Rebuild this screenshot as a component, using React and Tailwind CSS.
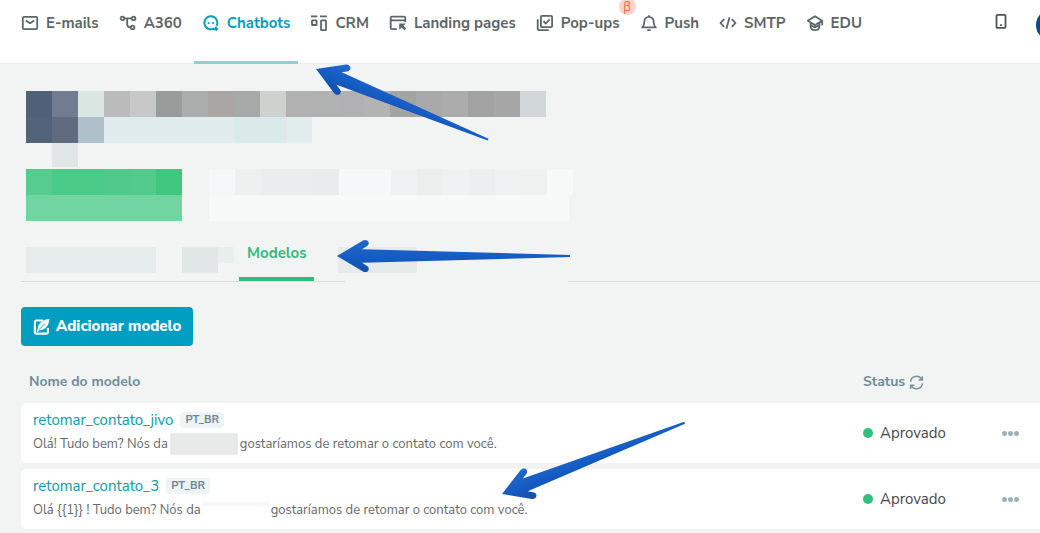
import React from "react";

const stroke = {
  width: 18,
  height: 18,
  viewBox: "0 0 18 18",
  fill: "none",
  stroke: "currentColor",
  strokeWidth: 1.8,
  strokeLinejoin: "round",
  "aria-hidden": true,
};

const MailIcon = () => (
  <svg {...stroke}>
    <rect x="1.8" y="2.8" width="14.4" height="12.4" rx="1.2" />
    <path d="M4.8 6.4 9 9.2l4.2-2.8" />
  </svg>
);

const FlowIcon = () => (
  <svg {...stroke}>
    <circle cx="3.4" cy="4.4" r="1.8" />
    <circle cx="14.6" cy="4.4" r="1.8" />
    <circle cx="13.6" cy="13.4" r="1.8" />
    <path d="M5.3 4.4h7.4M8.2 4.400v6.200q0 2.800 3.600 2.800" />
  </svg>
);

const ChatIcon = () => (
  <svg {...stroke} strokeWidth="1.9">
    <path d="M12.400 14.200A6.500 6.500 0 1 1 14.600 11.800M10.600 14.900c1.600.6 2.800.2 4.600 1.200M15.500 16.200 13.500 12.800" />
    <circle cx="6.600" cy="9" r="1.100" fill="currentColor" stroke="none" />
    <circle cx="11" cy="9" r="1.100" fill="currentColor" stroke="none" />
  </svg>
);

const CrmIcon = () => (
  <svg {...stroke} strokeLinejoin="miter">
    <path d="M1 2.400h6.400M10 2.400h7" />
    <rect x="2" y="6.400" width="4.600" height="4.600" rx=".6" />
    <rect x="11" y="6.400" width="5" height="9.800" rx=".6" />
  </svg>
);

const LandingIcon = () => (
  <svg {...stroke}>
    <path d="M7.800 15.200H2.900a1.200 1.200 0 0 1-1.200-1.200V3.900a1.200 1.200 0 0 1 1.200-1.200h12.200a1.200 1.200 0 0 1 1.200 1.200v4.300M1.700 6.400h14.600" />
    <path d="M10.200 9.600h6.600l-2.200 2.100 2.600 2.700-1.800 1.800-2.700-2.700-2.500 2.300z" fill="currentColor" stroke="none" />
  </svg>
);

const PopupIcon = () => (
  <svg {...stroke}>
    <rect x="4.900" y="1.900" width="11.200" height="11.200" rx="1.200" />
    <path d="M1.700 5.200v9.800a1.200 1.200 0 0 0 1.200 1.200h9.800M7.500 7.200l2.300 2.300 3.900-4.100" />
  </svg>
);

const BellIcon = () => (
  <svg {...stroke}>
    <path d="M2.200 13.400h13.600c-1.700-1.500-2.200-2.600-2.200-6a4.600 4.600 0 0 0-9.200 0c0 3.400-.5 4.500-2.200 6z" />
    <path d="M7.300 16.200h3.400M9 1.200v1.600" />
  </svg>
);

const CodeIcon = () => (
  <svg {...stroke} strokeLinejoin="miter">
    <path d="M5.200 5.200 1.600 9l3.600 3.800M12.800 5.200 16.400 9l-3.600 3.800M10.600 3.200 7.400 14.800" />
  </svg>
);

const EduIcon = () => (
  <svg {...stroke}>
    <path d="M9 2.200 16.200 6.700 9 11 1.800 6.700zM16.200 6.700v4.600M4.600 8.800v3.400q0 4 4.400 4t4.400-4V8.800M5 11.200l4 2.200 4-2.200" />
  </svg>
);

const PhoneIcon = () => (
  <svg {...stroke}>
    <rect x="4.500" y="1.900" width="9" height="13" rx="1" />
    <path d="M8.100 12.200h1.800" />
  </svg>
);

const EditIcon = () => (
  <svg width="17" height="18" viewBox="0 0 18 18" fill="none" stroke="currentColor" aria-hidden="true">
    <path d="M10.500 2.200H3.400A1.400 1.400 0 0 0 2 3.600v11a1.400 1.400 0 0 0 1.400 1.400h11a1.400 1.400 0 0 0 1.400-1.400V10" strokeWidth="2.200" />
    <path d="M17.400.6C11 1 5.400 4.600 5 11.200L3.800 13.600l1.100.8 1.700-2C12.800 12.400 16.800 8.400 17.400.6z" fill="currentColor" stroke="none" />
    <path d="M6.200 12 12.600 5.200" stroke="#009fc1" strokeWidth=".9" />
  </svg>
);

const RefreshIcon = () => (
  <svg width="15" height="15" viewBox="0 0 16 16" fill="none" stroke="currentColor" strokeWidth="1.600" aria-hidden="true">
    <path d="M1.700 7.200A6.300 6.300 0 0 1 13.400 4.400M14.300 1.200v4h-4M14.300 8.800A6.300 6.300 0 0 1 2.600 11.600M1.700 14.800v-4h4" />
  </svg>
);

const navItems = [
  { label: "E-mails", Icon: MailIcon },
  { label: "A360", Icon: FlowIcon },
  { label: "Chatbots", Icon: ChatIcon, active: true },
  { label: "CRM", Icon: CrmIcon },
  { label: "Landing pages", Icon: LandingIcon },
  { label: "Pop-ups", Icon: PopupIcon, beta: true },
  { label: "Push", Icon: BellIcon },
  { label: "SMTP", Icon: CodeIcon },
  { label: "EDU", Icon: EduIcon },
];

function Header() {
  return (
    <header className="flex h-16 items-start border-b border-[#eceeee] bg-white pl-[13px]">
      <nav className="flex grow gap-1">
        {navItems.map(({ label, Icon, active, beta }) => (
          <a
            key={label}
            href="#"
            className={
              "relative flex h-16 shrink-0 items-start gap-[7px] whitespace-nowrap border-b-[3px] px-2 pt-3 text-[15px]/[22px] font-bold " +
              (active ? "border-[#8fd0d8] text-[#009fc1]" : "border-transparent text-[#5d6667]")
            }
          >
            <span className="mt-[2px]">
              <Icon />
            </span>
            {label}
            {beta && (
              <span className="absolute -right-2 -top-[2px] flex size-[17px] items-center justify-center rounded-full bg-[#ffd3cd] text-xs font-normal text-[#f0603f]">
                β
              </span>
            )}
          </a>
        ))}
      </nav>
      <button type="button" aria-label="Celular" className="mr-[26px] mt-[13px] text-[#4c5657]">
        <PhoneIcon />
      </button>
      <div className="w-1 shrink-0 overflow-hidden pt-[9px]">
        <div className="size-8 rounded-full bg-[#004e8c]" />
      </div>
    </header>
  );
}

const titleCells = [
  "bg-[#4f6079]", "bg-[#727c91]", "bg-[#dae6e1]", "bg-[#bbbbbb]", "bg-[#c7c8c7]",
  "bg-[#989c9b]", "bg-[#acaead]", "bg-[#a9a6a4]", "bg-[#a7a8a8]", "bg-[#cfd1cf]",
  "bg-[#b0b1b0]", "bg-[#b1b2b2]", "bg-[#b1b1b4]", "bg-[#b3b3b3]", "bg-[#a3a3a3]",
  "bg-[#a9a9ac]", "bg-[#acacac]", "bg-[#a2a2a2]", "bg-[#a6a6a6]", "bg-[#d1d7d9]",
];
const subtitleCells = [
  "bg-[#536379]", "bg-[#5f6b80]", "bg-[#afc0cb]", "bg-[#e0ebed]", "bg-[#e0ebed]",
  "bg-[#dfebed]", "bg-[#dfebed]", "bg-[#dfebed]", "bg-[#dae9ea]", "bg-[#dae9ea]", "bg-[#e1eded]",
];
const greenCells = [
  "bg-[#56cc8e]", "bg-[#4aca87]", "bg-[#4aca87]", "bg-[#50ca8a]", "bg-[#52ca8b]", "bg-[#3fc780]",
];
const fieldCells = [
  "bg-[#f5f6f8]", "bg-[#eeefef]", "bg-[#ebeced]", "bg-[#ebeced]", "bg-[#e9ebec]", "bg-[#f5f7f8]",
  "bg-[#f5f7f8]", "bg-[#f0f1f2]", "bg-[#eceeee]", "bg-[#f0f1f2]", "bg-[#edeeef]", "bg-[#f0f1f2]",
  "bg-[#eff1f1]", "bg-[#f7f8f8]",
];

function Cells({ colors }) {
  return (
    <div className="flex">
      {colors.map((color, i) => (
        <div key={i} className={"h-[26px] w-[26px] shrink-0 " + color} />
      ))}
    </div>
  );
}

function MaskedSummary() {
  return (
    <div className="ml-[5px]" aria-hidden="true">
      <Cells colors={titleCells} />
      <Cells colors={subtitleCells} />
      <div className="ml-[26px] h-6 w-[26px] bg-[#dfe6e5]" />
      <div className="mt-[2px] flex gap-[27px]">
        <div>
          <Cells colors={greenCells} />
          <div className="h-[26px] bg-[#71d5a1]" />
        </div>
        <div>
          <Cells colors={fieldCells} />
          <div className="mr-1 h-[26px] bg-[#f7f8f8]" />
        </div>
      </div>
    </div>
  );
}

function Tabs() {
  return (
    <div className="relative mt-4 flex h-[45px] items-stretch border-b border-[#d9dddd] pl-[5px]">
      <div className="mt-[10px] flex h-[26px] w-[213px] gap-[26px]" aria-hidden="true">
        <div className="w-[130px] bg-[#e6ecec]" />
        <div className="flex items-start">
          <div className="h-[26px] w-9 bg-[#e1e7e7]" />
          <div className="h-4 w-4 bg-[#e8edee]" />
        </div>
      </div>
      <a href="#" className="border-b-4 border-[#35b980] px-2 pt-[5px] text-[15px]/[22px] font-bold text-[#35b980]">
        Modelos
      </a>
      <div className="ml-6 mt-[10px] h-[26px] w-[79px] bg-[#e5ebeb]" aria-hidden="true" />
      <div className="absolute -bottom-px left-[324px] h-px w-[223px] bg-[#f2f4f4]" aria-hidden="true" />
    </div>
  );
}

const templates = [
  {
    name: "retomar_contato_jivo",
    before: "Olá! Tudo bem? Nós da",
    mask: "h-[22px] w-[68px] bg-[#e8e9e9]",
    after: "gostaríamos de retomar o contato com você.",
  },
  {
    name: "retomar_contato_3",
    before: "Olá {{1}} ! Tudo bem? Nós da",
    mask: "mb-3 h-1 w-[66px] bg-[#f6f7f7]",
    after: "gostaríamos de retomar o contato com você.",
  },
];

function TemplateTable() {
  return (
    <table className="mt-[15px] w-full table-fixed border-separate border-spacing-x-0 border-spacing-y-[6px]">
      <thead>
        <tr className="h-[30px] text-left text-sm text-[#6f8d9b]">
          <th className="px-2 font-bold">Nome do modelo</th>
          <th className="w-[130px] px-2 font-bold">
            <span className="flex items-center gap-1">
              Status
              <button type="button" aria-label="Atualizar" className="text-[#7e9196]">
                <RefreshIcon />
              </button>
            </span>
          </th>
          <th className="w-[55px]" aria-label="Ações" />
        </tr>
      </thead>
      <tbody>
        {templates.map((t) => (
          <tr key={t.name} className="h-[60px] bg-white">
            <td className="rounded-l-md pb-[3px] pl-3">
              <div className="flex h-6 items-center gap-[7px]">
                <a href="#" className="text-[15px]/6 text-[#0d9aaa]">
                  {t.name}
                </a>
                <span className="rounded bg-[#eef3f5] px-[5px] text-[11px]/4 font-bold text-[#6f8791]">PT_BR</span>
              </div>
              <div className="flex h-6 items-center gap-[2px] whitespace-nowrap text-[13px]/6 text-[#666a6b]">
                <span>{t.before}</span>
                <span className={t.mask} aria-hidden="true" />
                <span>{t.after}</span>
              </div>
            </td>
            <td className="px-2">
              <span className="flex items-center gap-[7px] text-[15px]/6 text-[#444849]">
                <span className="size-[10px] rounded-full bg-[#2fc07c]" />
                Aprovado
              </span>
            </td>
            <td className="pl-[17px]">
              <button type="button" aria-label="Mais opções" className="flex h-6 items-center gap-px">
                <span className="size-[5px] rounded-full bg-[#9bb0b9]" />
                <span className="size-[5px] rounded-full bg-[#9bb0b9]" />
                <span className="size-[5px] rounded-full bg-[#9bb0b9]" />
              </button>
            </td>
          </tr>
        ))}
      </tbody>
    </table>
  );
}

function Arrow({ x, y, angle, length }) {
  return (
    <path
      transform={`translate(${x} ${y}) rotate(${angle})`}
      d={`M0 0 26-15.500C30-17.500 34-13.500 30.500-10.200L25-6.800 ${length}-1V1L25 6.800 30.500 10.200C34 13.500 30 17.500 26 15.500Z`}
      fill="url(#arrowFill)"
    />
  );
}

function Annotations() {
  return (
    <svg className="pointer-events-none absolute left-0 top-0" width="700" height="533" aria-hidden="true">
      <defs>
        <linearGradient id="arrowFill" x1="0" y1="0" x2="0" y2="1">
          <stop offset="0" stopColor="#2368cc" />
          <stop offset=".5" stopColor="#155cc4" />
          <stop offset="1" stopColor="#1450a8" />
        </linearGradient>
      </defs>
      <Arrow x={316} y={69} angle={22.300} length={186} />
      <Arrow x={337} y={256} angle={0} length={233} />
      <Arrow x={502} y={494} angle={-21.300} length={196} />
    </svg>
  );
}

export default function App() {
  return (
    <div className="relative min-h-screen overflow-x-hidden bg-[#f2f4f4] font-['Nunito_Sans','Open_Sans',sans-serif]">
      <Header />
      <main className="pl-[21px] pt-[27px]">
        <MaskedSummary />
        <Tabs />
        <button
          type="button"
          className="mt-[25px] flex h-[39px] items-center gap-[6px] rounded bg-[#009fc1] px-3 text-[15px] font-extrabold text-white"
        >
          <EditIcon />
          Adicionar modelo
        </button>
        <TemplateTable />
      </main>
      <Annotations />
    </div>
  );
}
